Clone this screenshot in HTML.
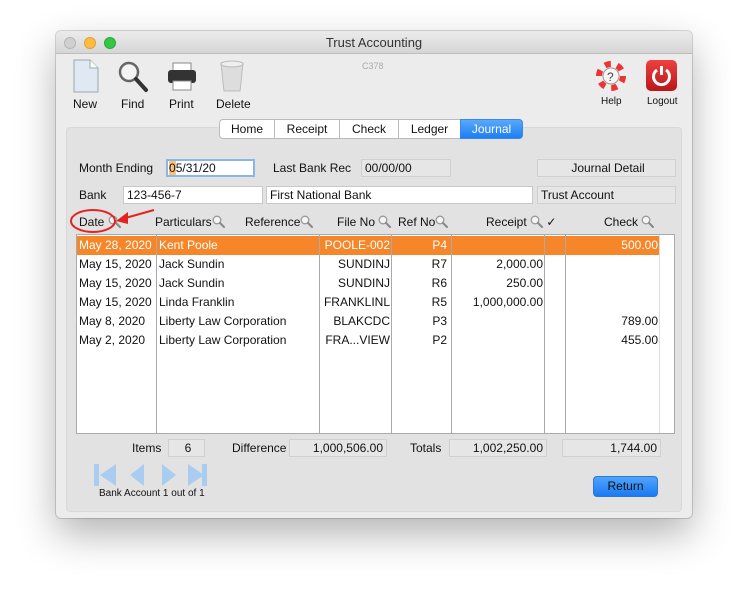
<!DOCTYPE html>
<html><head><meta charset="utf-8"><style>
*{box-sizing:border-box;margin:0;padding:0}
body{width:748px;height:598px;background:#fff;font-family:"Liberation Sans",sans-serif;font-size:12px;color:#111;position:relative;overflow:hidden}
.a{position:absolute;white-space:nowrap}
.win{position:absolute;left:56px;top:31px;width:636px;height:487px;background:#ececec;border-radius:5px;box-shadow:0 16px 40px rgba(0,0,0,.3),0 0 0 1px rgba(0,0,0,.15)}
.title{position:absolute;left:0;top:0;width:636px;height:23px;background:linear-gradient(#ebebeb,#d6d6d6);border-bottom:1px solid #bdbdbd;border-radius:5px 5px 0 0;text-align:center;line-height:23px;font-size:13px;color:#333}
.dot{position:absolute;top:6px;width:12px;height:12px;border-radius:50%}
.fld{position:absolute;height:18px;border:1px solid #c8c8c8;background:#fff;line-height:16px;padding-left:3px;font-size:12px}
.gr{background:#e6e6e6;border-color:#d0d0d0}
.tab{position:absolute;top:119px;height:20px;line-height:19px;text-align:center;border:1px solid #bbb;background:#fff;font-size:12px}
.hd{position:absolute;top:215px;font-size:12px}
.m{display:inline-block;width:13px;height:13px;vertical-align:-2px;background:no-repeat}
.r{position:absolute;left:77px;width:583px;height:19px;line-height:19px;font-size:12px}
.r span{position:absolute}
.vl{position:absolute;top:235px;width:1px;height:198px;background:#aaa}
</style></head><body>
<div class="win">
<div class="title">Trust Accounting</div>
<div class="dot" style="left:8px;background:#d0d0d0;border:1px solid #b5b5b5"></div>
<div class="dot" style="left:28px;background:#fdbc40;border:1px solid #dea236"></div>
<div class="dot" style="left:48px;background:#33c748;border:1px solid #27aa35"></div>
</div>
<svg class="a" style="left:72px;top:59px" width="28" height="34"><path d="M2 1h16l8 8v24H2z" fill="#dfe8f3" stroke="#9aa" /><path d="M18 1v8h8" fill="#fff" stroke="#9aa"/></svg>
<svg class="a" style="left:117px;top:60px" width="32" height="34"><circle cx="12" cy="12" r="9" fill="#f4f4f4" stroke="#666" stroke-width="2.5"/><path d="M19 19l10 11" stroke="#333" stroke-width="4" stroke-linecap="round"/></svg>
<svg class="a" style="left:166px;top:62px" width="32" height="30"><rect x="7" y="1" width="18" height="8" fill="#fff" stroke="#888"/><rect x="2" y="8" width="28" height="13" rx="3" fill="#333"/><rect x="7" y="19" width="18" height="9" fill="#fff" stroke="#888"/></svg>
<svg class="a" style="left:218px;top:60px" width="28" height="34"><path d="M3 3h22l-3 28H6z" fill="#ddd" stroke="#bbb"/><ellipse cx="14" cy="4" rx="11" ry="3" fill="#eee" stroke="#bbb"/></svg>
<div class="a" style="left:73px;top:97px">New</div>
<div class="a" style="left:121px;top:97px">Find</div>
<div class="a" style="left:169px;top:97px">Print</div>
<div class="a" style="left:216px;top:97px">Delete</div>
<div class="a" style="left:362px;top:61px;font-size:9px;color:#aaa">C378</div>
<svg class="a" style="left:596px;top:61px" width="30" height="30"><circle cx="15" cy="15" r="12" fill="none" stroke="#eee" stroke-width="6"/><circle cx="15" cy="15" r="12" fill="none" stroke="#e33" stroke-width="6" stroke-dasharray="6 6.5"/><circle cx="15" cy="15" r="8" fill="#f5f5f5" stroke="#999"/><text x="11" y="20" font-size="12" fill="#444" font-family="Liberation Sans">?</text></svg>
<div class="a" style="left:646px;top:60px;width:31px;height:31px;border-radius:5px;background:linear-gradient(#f04040,#b81818)"></div>
<svg class="a" style="left:650px;top:64px" width="23" height="23"><path d="M7 6a8 8 0 1 0 9 0" fill="none" stroke="#fff" stroke-width="3"/><path d="M11.5 2v9" stroke="#fff" stroke-width="3"/></svg>
<div class="a" style="left:601px;top:96px;font-size:10px">Help</div>
<div class="a" style="left:647px;top:96px;font-size:10px">Logout</div>
<div class="a" style="left:66px;top:127px;width:616px;height:385px;background:#e2e2e2;border-radius:4px;border:1px solid #d8d8d8"></div>
<div class="tab" style="left:219px;width:56px;border-radius:4px 0 0 4px">Home</div>
<div class="tab" style="left:274px;width:66px">Receipt</div>
<div class="tab" style="left:339px;width:60px">Check</div>
<div class="tab" style="left:398px;width:63px">Ledger</div>
<div class="tab" style="left:460px;width:63px;background:linear-gradient(#5aa8fb,#1b7ef5);color:#fff;border-color:#3a88e8;border-radius:0 4px 4px 0">Journal</div>
<div class="a" style="left:79px;top:161px">Month Ending</div>
<div class="fld" style="left:166px;top:159px;width:89px;border:2px solid #8ab6ea;line-height:14px;padding-left:1px"><span style="background:#f9c47a">0</span>5/31/20</div>
<div class="a" style="left:273px;top:161px">Last Bank Rec</div>
<div class="fld gr" style="left:361px;top:159px;width:90px">00/00/00</div>
<div class="fld gr" style="left:537px;top:159px;width:139px;text-align:center">Journal Detail</div>
<div class="a" style="left:79px;top:188px">Bank</div>
<div class="fld" style="left:123px;top:186px;width:140px">123-456-7</div>
<div class="fld" style="left:266px;top:186px;width:267px">First National Bank</div>
<div class="fld gr" style="left:537px;top:186px;width:139px">Trust Account</div>
<svg width="0" height="0" style="position:absolute"><defs><g id="mg"><circle cx="5" cy="5" r="3.8" fill="#f4f4f4" stroke="#999" stroke-width="1.3"/><path d="M8 8l4 4" stroke="#888" stroke-width="2" stroke-linecap="round"/></g></defs></svg>
<div class="hd" style="left:79px">Date <svg class="m" viewBox="0 0 13 13"><use href="#mg"/></svg></div>
<div class="hd" style="left:155px">Particulars<svg class="m" viewBox="0 0 13 13"><use href="#mg"/></svg></div>
<div class="hd" style="left:245px">Reference<svg class="m" viewBox="0 0 13 13"><use href="#mg"/></svg></div>
<div class="hd" style="left:337px">File No <svg class="m" viewBox="0 0 13 13"><use href="#mg"/></svg></div>
<div class="hd" style="left:398px">Ref No<svg class="m" viewBox="0 0 13 13"><use href="#mg"/></svg></div>
<div class="hd" style="left:486px">Receipt <svg class="m" viewBox="0 0 13 13"><use href="#mg"/></svg> ✓</div>
<div class="hd" style="left:604px">Check <svg class="m" viewBox="0 0 13 13"><use href="#mg"/></svg></div>
<svg class="a" style="left:68px;top:205px" width="90" height="30"><ellipse cx="25" cy="16" rx="22" ry="11" fill="none" stroke="#e52222" stroke-width="2"/><path d="M86 5L54 14" stroke="#e52222" stroke-width="2"/><path d="M48 16l12-9 0 12z" fill="#e52222"/></svg>
<div class="a" style="left:76px;top:234px;width:599px;height:200px;background:#fff;border:1px solid #aaa"></div>
<div class="r" style="top:236px;background:#f6862a;color:#fff"></div>
<div class="vl" style="left:156px"></div><div class="vl" style="left:319px"></div><div class="vl" style="left:391px"></div><div class="vl" style="left:451px"></div><div class="vl" style="left:544px"></div><div class="vl" style="left:565px"></div><div class="vl" style="left:659px;background:#ddd"></div>
<div class="r" style="top:236px;color:#fff"><span style="left:2px">May 28, 2020</span><span style="left:82px">Kent Poole</span><span style="right:270px">POOLE-002</span><span style="right:213px">P4</span><span style="right:2px">500.00</span></div>
<div class="r" style="top:255px"><span style="left:2px">May 15, 2020</span><span style="left:82px">Jack Sundin</span><span style="right:270px">SUNDINJ</span><span style="right:213px">R7</span><span style="right:117px">2,000.00</span></div>
<div class="r" style="top:274px"><span style="left:2px">May 15, 2020</span><span style="left:82px">Jack Sundin</span><span style="right:270px">SUNDINJ</span><span style="right:213px">R6</span><span style="right:117px">250.00</span></div>
<div class="r" style="top:293px"><span style="left:2px">May 15, 2020</span><span style="left:82px">Linda Franklin</span><span style="right:270px">FRANKLINL</span><span style="right:213px">R5</span><span style="right:117px">1,000,000.00</span></div>
<div class="r" style="top:312px"><span style="left:2px">May 8, 2020</span><span style="left:82px">Liberty Law Corporation</span><span style="right:270px">BLAKCDC</span><span style="right:213px">P3</span><span style="right:2px">789.00</span></div>
<div class="r" style="top:331px"><span style="left:2px">May 2, 2020</span><span style="left:82px">Liberty Law Corporation</span><span style="right:270px">FRA...VIEW</span><span style="right:213px">P2</span><span style="right:2px">455.00</span></div>
<div class="a" style="left:132px;top:441px">Items</div>
<div class="fld gr" style="left:168px;top:439px;width:37px;text-align:center">6</div>
<div class="a" style="left:232px;top:441px">Difference</div>
<div class="fld gr" style="left:289px;top:439px;width:98px;text-align:right;padding-right:3px">1,000,506.00</div>
<div class="a" style="left:410px;top:441px">Totals</div>
<div class="fld gr" style="left:449px;top:439px;width:98px;text-align:right;padding-right:3px">1,002,250.00</div>
<div class="fld gr" style="left:562px;top:439px;width:99px;text-align:right;padding-right:3px">1,744.00</div>
<svg class="a" style="left:92px;top:462px" width="120" height="26"><g fill="#a9cdf0"><rect x="2" y="2" width="5" height="22"/><path d="M24 2v22L8 13z"/><path d="M52 2v22L38 13z"/><path d="M70 2v22l14-11z"/><path d="M96 2v22l16-11z"/><rect x="110" y="2" width="5" height="22"/></g></svg>
<div class="a" style="left:99px;top:488px;font-size:10px">Bank Account 1 out of 1</div>
<div class="a" style="left:593px;top:476px;width:65px;height:21px;border-radius:4px;background:linear-gradient(#4fa3fb,#1a7bf2);border:1px solid #2a78d8;text-align:center;line-height:19px;font-size:12px">Return</div>
</body></html>
